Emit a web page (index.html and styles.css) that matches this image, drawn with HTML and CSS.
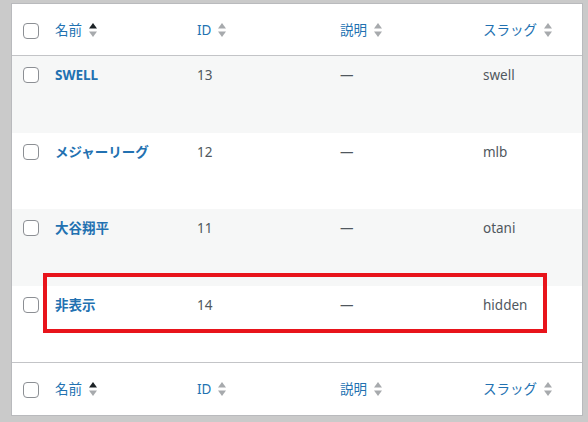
FILE: index.html
```html
<!DOCTYPE html>
<html lang="ja">
<head>
<meta charset="utf-8">
<title>タグ一覧</title>
<link rel="stylesheet" href="styles.css">
</head>
<body>
<div class="frame">
  <div class="panel">
    <table class="list">
      <colgroup>
        <col class="c-check"><col class="c-name"><col class="c-id"><col class="c-desc"><col class="c-slug">
      </colgroup>
      <thead>
        <tr class="head-row">
          <th class="check"><span class="cb"></span></th>
          <th><a class="sort">名前<svg class="ind asc" width="8" height="14" viewBox="0 0 8 14"><path class="up" d="M4 0L8 5.5H0Z"/><path class="down" d="M0 8.5H8L4 14Z"/></svg></a></th>
          <th><a class="sort">ID<svg class="ind" width="8" height="14" viewBox="0 0 8 14"><path class="up" d="M4 0L8 5.5H0Z"/><path class="down" d="M0 8.5H8L4 14Z"/></svg></a></th>
          <th><a class="sort">説明<svg class="ind" width="8" height="14" viewBox="0 0 8 14"><path class="up" d="M4 0L8 5.5H0Z"/><path class="down" d="M0 8.5H8L4 14Z"/></svg></a></th>
          <th><a class="sort">スラッグ<svg class="ind" width="8" height="14" viewBox="0 0 8 14"><path class="up" d="M4 0L8 5.5H0Z"/><path class="down" d="M0 8.5H8L4 14Z"/></svg></a></th>
        </tr>
      </thead>
      <tbody>
        <tr class="row alt">
          <td class="check"><span class="cb"></span></td>
          <td><a class="name">SWELL</a></td>
          <td>13</td>
          <td>—</td>
          <td>swell</td>
        </tr>
        <tr class="row">
          <td class="check"><span class="cb"></span></td>
          <td><a class="name">メジャーリーグ</a></td>
          <td>12</td>
          <td>—</td>
          <td>mlb</td>
        </tr>
        <tr class="row alt">
          <td class="check"><span class="cb"></span></td>
          <td><a class="name">大谷翔平</a></td>
          <td>11</td>
          <td>—</td>
          <td>otani</td>
        </tr>
        <tr class="row">
          <td class="check"><span class="cb"></span></td>
          <td><a class="name">非表示</a></td>
          <td>14</td>
          <td>—</td>
          <td>hidden</td>
        </tr>
      </tbody>
      <tfoot>
        <tr class="foot-row">
          <th class="check"><span class="cb"></span></th>
          <th><a class="sort">名前<svg class="ind asc" width="8" height="14" viewBox="0 0 8 14"><path class="up" d="M4 0L8 5.5H0Z"/><path class="down" d="M0 8.5H8L4 14Z"/></svg></a></th>
          <th><a class="sort">ID<svg class="ind" width="8" height="14" viewBox="0 0 8 14"><path class="up" d="M4 0L8 5.5H0Z"/><path class="down" d="M0 8.5H8L4 14Z"/></svg></a></th>
          <th><a class="sort">説明<svg class="ind" width="8" height="14" viewBox="0 0 8 14"><path class="up" d="M4 0L8 5.5H0Z"/><path class="down" d="M0 8.5H8L4 14Z"/></svg></a></th>
          <th><a class="sort">スラッグ<svg class="ind" width="8" height="14" viewBox="0 0 8 14"><path class="up" d="M4 0L8 5.5H0Z"/><path class="down" d="M0 8.5H8L4 14Z"/></svg></a></th>
        </tr>
      </tfoot>
    </table>
    <div class="highlight"></div>
  </div>
</div>
</body>
</html>
```

FILE: styles.css
```css
html, body {
  margin: 0;
  padding: 0;
}
body {
  background: #cacaca;
  width: 588px;
  height: 422px;
  overflow: hidden;
  font-family: "Noto Sans", "Noto Sans CJK JP", sans-serif;
  font-size: 13.5px;
  color: #50575e;
}
.frame {
  padding: 3px 5px 0 11px;
}
.panel {
  position: relative;
  width: 570px;
  height: 411px;
  border: 1px solid #b9babd;
  background: #fff;
}
.list {
  width: 570px;
  table-layout: fixed;
  border-collapse: separate;
  border-spacing: 0;
}
.c-check { width: 33px; }
.c-name { width: 142px; }
.c-id { width: 143px; }
.c-desc { width: 143px; }
.c-slug { width: 109px; }

th, td {
  padding: 0 10px;
  text-align: left;
  font-weight: 400;
  line-height: 20px;
}
.head-row { height: 52px; }
.head-row th {
  border-bottom: 1px solid #c3c4c7;
  vertical-align: middle;
}
.foot-row { height: 53px; }
.foot-row th {
  border-top: 1px solid #c3c4c7;
  vertical-align: middle;
}
th.check, td.check {
  padding: 0 0 0 11px;
}
.head-row th.check, .foot-row th.check {
  padding-top: 2px;
}
.cb {
  display: block;
  box-sizing: border-box;
  width: 16px;
  height: 16px;
  border: 1px solid #8c8f94;
  border-radius: 4px;
  background: #fff;
}
.sort {
  display: inline-flex;
  align-items: center;
  gap: 7px;
  color: #2271b1;
  text-decoration: none;
}
.ind path { fill: #a7aaad; }
.ind.asc .up { fill: #1d2327; }
.ind.asc .down { fill: #a7aaad; }

.row { height: 76px; }
.row:nth-child(odd) { height: 77px; }
.row.alt { background: #f6f7f7; }
.row td {
  vertical-align: top;
  padding-top: 9px;
}
.row td.check {
  padding-top: 11px;
}
.name {
  color: #2271b1;
  font-weight: 700;
  text-decoration: none;
}
.highlight {
  position: absolute;
  left: 31px;
  top: 269px;
  width: 496px;
  height: 52px;
  border: 4px solid #e8141b;
}
```
